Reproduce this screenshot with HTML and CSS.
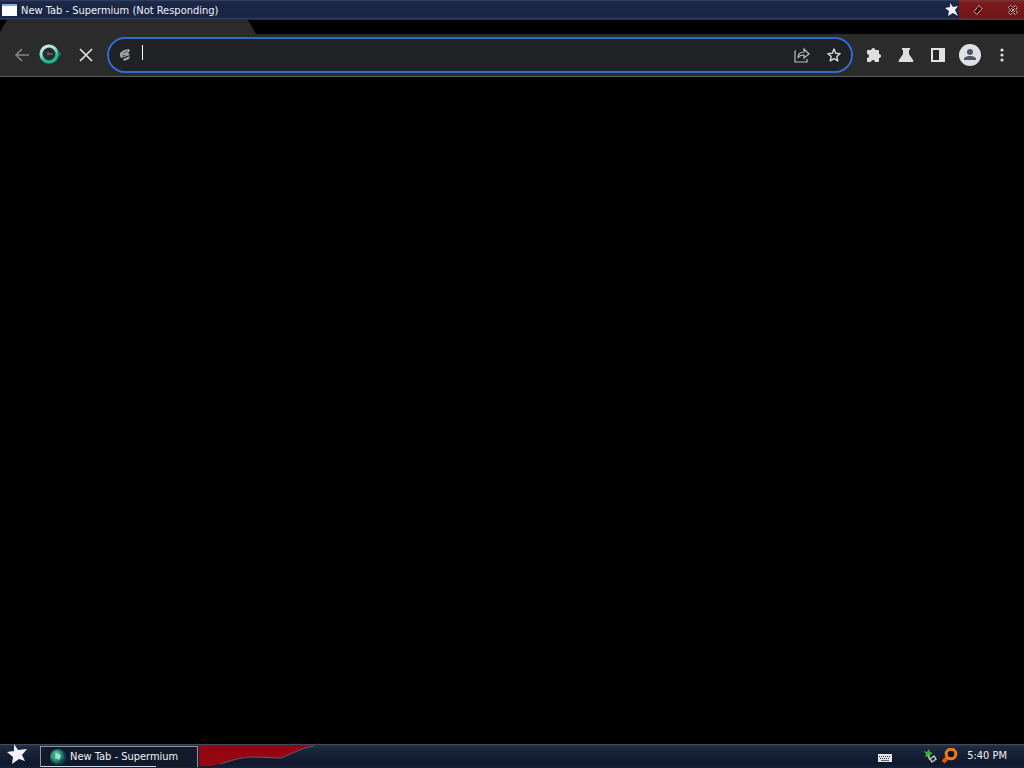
FILE: index.html
```html
<!DOCTYPE html>
<html lang="en">
<head>
<meta charset="utf-8">
<title>New Tab - Supermium</title>
<link rel="stylesheet" href="styles.css">
</head>
<body>
<main class="window">
  <header class="titlebar">
    <span class="app-icon"></span>
    <h1 class="title">New Tab - Supermium (Not Responding)</h1>
    <div class="caption">
      <button class="cap minimize" aria-label="Minimize"><svg width="14" height="16" viewBox="0 0 14 16"><path fill="#f4f2ff" d="M5 1l3 4 5-1-3 4 3 6-5-3-5 3 1-5-4-3 5-1z"/></svg></button>
      <button class="cap maximize" aria-label="Restore"><svg width="12" height="12" viewBox="0 0 12 12"><path fill="#3c0909" stroke="#ead9cf" stroke-dasharray="1.400 .4" d="M7 1.500l3 3L5 10.500l-3-3z"/></svg></button>
      <button class="cap close" aria-label="Close"><svg width="12" height="12" viewBox="0 0 12 12"><path fill="#3c0909" stroke="#ead9cf" stroke-dasharray="1.400 .4" d="M1.500 3.500l2-2L6 3.500l2.500-2 2 2-2 2.500 2 2.500-2 2L6 8.500l-2.500 2-2-2L3.500 6z"/><path stroke="#d8bdb5" d="M4 4l4 4M8 4L4 8"/></svg></button>
    </div>
  </header>
  <div class="tabstrip"><div class="tab"></div></div>
  <nav class="toolbar" aria-label="Browser">
    <div class="nav-buttons">
      <button aria-label="Back"><svg width="16" height="16" viewBox="0 0 16 16"><path fill="none" stroke="#858585" stroke-width="1.500" d="M15 8H2M8 2L2 8l6 6"/></svg></button>
      <span class="busy"><svg width="24" height="24" viewBox="0 0 24 24"><defs><linearGradient id="ring" x1="0" y1="0" x2=".4" y2="1"><stop offset=".1" stop-color="#d5e5e0"/><stop offset=".5" stop-color="#a5d0c5"/><stop offset=".85" stop-color="#22b890"/></linearGradient></defs><path fill="#0a8568" d="M17 4l6 7-6 9z"/><circle cx="11" cy="11" r="8" fill="#292c2c" stroke="#075c4a" stroke-width="4"/><circle cx="11" cy="11" r="8" fill="none" stroke="url(#ring)" stroke-width="3"/><path stroke="#8c7c83" d="M10 11h5M10 9v3"/></svg></span>
      <button aria-label="Stop loading"><svg width="16" height="16" viewBox="0 0 16 16"><path stroke="#e4e4e4" stroke-width="1.600" d="M2 2l12 12M14 2L2 14"/></svg></button>
    </div>
    <div class="address">
      <svg width="14" height="16" viewBox="0 0 14 16"><path fill="#a5a5a5" d="M2 6l4-3 5-1 1 2-2 2 2 2-9 3-1-2zM5 12l7-3-1 3-5 2z"/><path stroke="#555" d="M5 6l5-2M4 9l4-1"/></svg>
      <input class="url" type="text" aria-label="Address and search bar">
      <span class="caret"></span>
      <button aria-label="Share"><svg width="16" height="16" viewBox="0 0 16 16"><g fill="none" stroke="#bdbdbd" stroke-width="1.200"><path d="M2 4H1v11h12v-3"/><path d="M4 11c0-4 2-6 6-6V2l5 5-5 4V8c-3 0-5 1-6 3z"/></g></svg></button>
      <button aria-label="Bookmark this tab"><svg width="16" height="16" viewBox="0 0 16 16"><path fill="none" stroke="#d8d8d8" stroke-width="1.400" stroke-linejoin="round" d="M8 2l1.700 4.200 4.500.4-3.400 3 1 4.400L8 11.600 4.200 14l1-4.400-3.400-3 4.500-.4z"/></svg></button>
    </div>
    <div class="tools">
      <button aria-label="Extensions"><svg width="16" height="16" viewBox="0 0 16 16"><path fill="#dedede" d="M1 4q0-1 1-1h3.300a2 2 0 0 1 4 0H12q1 0 1 1v3a2 2 0 0 1 0 4v3q0 1-1 1H9a2 2 0 0 0-4 0H2q-1 0-1-1v-3a2 2 0 0 0 0-4z"/></svg></button>
      <button aria-label="Labs"><svg width="16" height="16" viewBox="0 0 16 16"><path fill="#dedede" d="M4 1h8v2h-1v4l4 6q1 2-1 2H2q-2 0-1-2l4-6V3H4z"/></svg></button>
      <button aria-label="Side panel"><svg width="16" height="16" viewBox="0 0 16 16"><path fill="#e2e2e2" fill-rule="evenodd" d="M1 1h14v14H1zM3 3v10h6V3z"/></svg></button>
      <button aria-label="Profile"><svg width="24" height="24" viewBox="0 0 24 24"><circle cx="12" cy="12" r="11" fill="#e0e1e5"/><circle cx="12" cy="9" r="3" fill="#515565"/><path fill="#515565" d="M6 17v-1c0-4 12-4 12 0v1z"/></svg></button>
      <button aria-label="Menu"><svg width="16" height="16" viewBox="0 0 16 16"><g fill="#dedede"><circle cx="8" cy="3" r="1.600"/><circle cx="8" cy="8" r="1.600"/><circle cx="8" cy="13" r="1.600"/></g></svg></button>
    </div>
  </nav>
  <section class="page" aria-label="Page content"></section>
</main>
<footer class="taskbar">
  <button class="start" aria-label="Start"><svg width="22" height="22" viewBox="0 0 22 22"><path fill="#f4f3fb" d="M8 0l4 6 9-1-5 6 3 6-6-2-7 5 1-7-6-5 7-1z"/></svg></button>
  <button class="task">
    <svg width="16" height="16" viewBox="0 0 16 16"><defs><radialGradient id="globe" cx=".4" cy=".4"><stop stop-color="#9fe8d1"/><stop offset=".5" stop-color="#39a78d"/><stop offset="1" stop-color="#0b4547"/></radialGradient></defs><circle cx="8" cy="8" r="8" fill="url(#globe)"/><path fill="#a0e2d0" d="M6 4l5 2-2 5-4-3z"/><path fill="none" stroke="#238273" d="M2 4l3 2-2 4 4 4M12 3l-1 3 3 3"/></svg>
    <span>New Tab - Supermium</span>
  </button>
  <svg class="ribbon" width="116" height="22" viewBox="0 0 116 22"><path fill="#940610" d="M0 2h115C106 3 96 8 82 14L56 13C40 13 32 17 21 20L12 22H0z"/><path fill="none" stroke="#76515d" d="M115 2C106 3 96 8 82 14L56 13C40 13 32 17 21 20"/></svg>
  <div class="tray">
    <button class="keyboard" aria-label="Keyboard"><svg width="14" height="8" viewBox="0 0 14 8"><path fill="#e5e5e5" d="M0 0h14v8H0z"/><path stroke="#28303c" stroke-dasharray="1 1" d="M1 2.500h12M2 4.500h10"/><path stroke="#606870" d="M3 6.500h8"/></svg></button>
    <svg width="14" height="15" viewBox="0 0 14 15"><path fill="#43a83a" d="M1 2l3 1 2-3 1 3 3 1-3 2v3L5 7 2 8l1-3z"/><path fill="none" stroke="#8ebd8b" stroke-width="2" d="M5 6l2 5"/><path fill="none" stroke="#bfc6c1" stroke-width="1.500" d="M7 10l4-3 2 3-4 3z"/></svg>
    <svg width="16" height="16" viewBox="0 0 16 16"><path stroke="#db5909" stroke-width="4" d="M6 9l-5 5"/><circle cx="9" cy="6" r="4.800" fill="#101523" stroke="#f17b12" stroke-width="3"/></svg>
    <time class="clock">5:40 PM</time>
  </div>
</footer>
</body>
</html>
```
FILE: styles.css
```css
* { box-sizing: border-box; }
body {
  margin: 0;
  min-height: 100vh;
  display: flex;
  flex-direction: column;
  background: #000;
  color: #f1f1f4;
  font: 11px/16px Tahoma, "DejaVu Sans Condensed", "DejaVu Sans", sans-serif;
}
button {
  display: flex;
  align-items: center;
  justify-content: center;
  padding: 0;
  border: 0;
  background: none;
  color: inherit;
  font: inherit;
}
svg { display: block; flex: none; }
.window { flex: 1; display: flex; flex-direction: column; }
.titlebar {
  display: flex;
  align-items: center;
  height: 20px;
  padding-left: 2px;
  background: linear-gradient(#35415f, #1c2747 2px, #1a2444 17px, #34405e 19px, #101827);
}
.app-icon {
  width: 15px;
  height: 12px;
  border-top: 2px solid #83aee5;
  background: #fff;
}
.title {
  flex: 1;
  margin: 0;
  padding: 2px 0 0 4px;
  font: inherit;
}
.caption { display: flex; align-self: stretch; }
.cap { background: linear-gradient(#783338, #7b191b 3px, #721416 17px, #493d46); }
.minimize { width: 14px; background: none; }
.maximize { width: 38px; }
.close { width: 27px; padding-left: 5px; }
.tabstrip { height: 14px; background: #000; }
.tab {
  width: 256px;
  max-width: 100%;
  height: 14px;
  background: #2b2b2b;
  clip-path: polygon(7px 0, calc(100% - 8px) 0, 100% 100%, 0 100%, 0 12px);
}
.toolbar {
  display: flex;
  align-items: center;
  height: 43px;
  padding: 0 14px;
  border-bottom: 1px solid #5b5c5c;
  background: #2b2b2b;
}
.nav-buttons { display: flex; align-items: center; width: 93px; }
.busy { margin: 0 16px 0 8px; }
.address {
  flex: 1;
  display: flex;
  align-items: center;
  height: 36px;
  padding: 0 9px;
  border: 2px solid #2f6bc9;
  border-radius: 18px;
  background: #202124;
  min-width: 0;
}
.url {
  order: 1;
  flex: 1;
  min-width: 0;
  height: 24px;
  border: 0;
  outline: 0;
  background: none;
  color: #fff;
  font: inherit;
}
.caret { width: 1px; height: 15px; margin: 0 0 6px 10px; background: #fff; }
.address button { order: 2; margin-left: 16px; }
.tools { display: flex; align-items: center; gap: 16px; padding-left: 13px; }
.tools [aria-label="Profile"] { margin: 0 -4px; }
.page { flex: 1; }
.taskbar {
  display: flex;
  align-items: center;
  height: 24px;
  background: linear-gradient(#4b5361, #202b40 2px, #151e33 12px, #10182c 20px, #13203e);
}
.start { width: 34px; align-self: flex-start; }
.task {
  justify-content: flex-start;
  gap: 4px;
  width: 158px;
  height: 21px;
  margin-left: 6px;
  padding-left: 9px;
  border: 1px solid #8a92a0;
  border-bottom: 0;
  background:
    linear-gradient(90deg, #d5d8de 74%, transparent 74%) bottom / 100% 1px no-repeat,
    #111a2a;
}
.ribbon { align-self: flex-start; margin-left: 1px; }
.tray { display: flex; align-items: center; margin-left: auto; padding-right: 17px; }
.keyboard { margin: 4px 31px 0 0; }
.tray > svg + svg { margin-left: 5px; }
.clock { margin-left: 9px; }
```
